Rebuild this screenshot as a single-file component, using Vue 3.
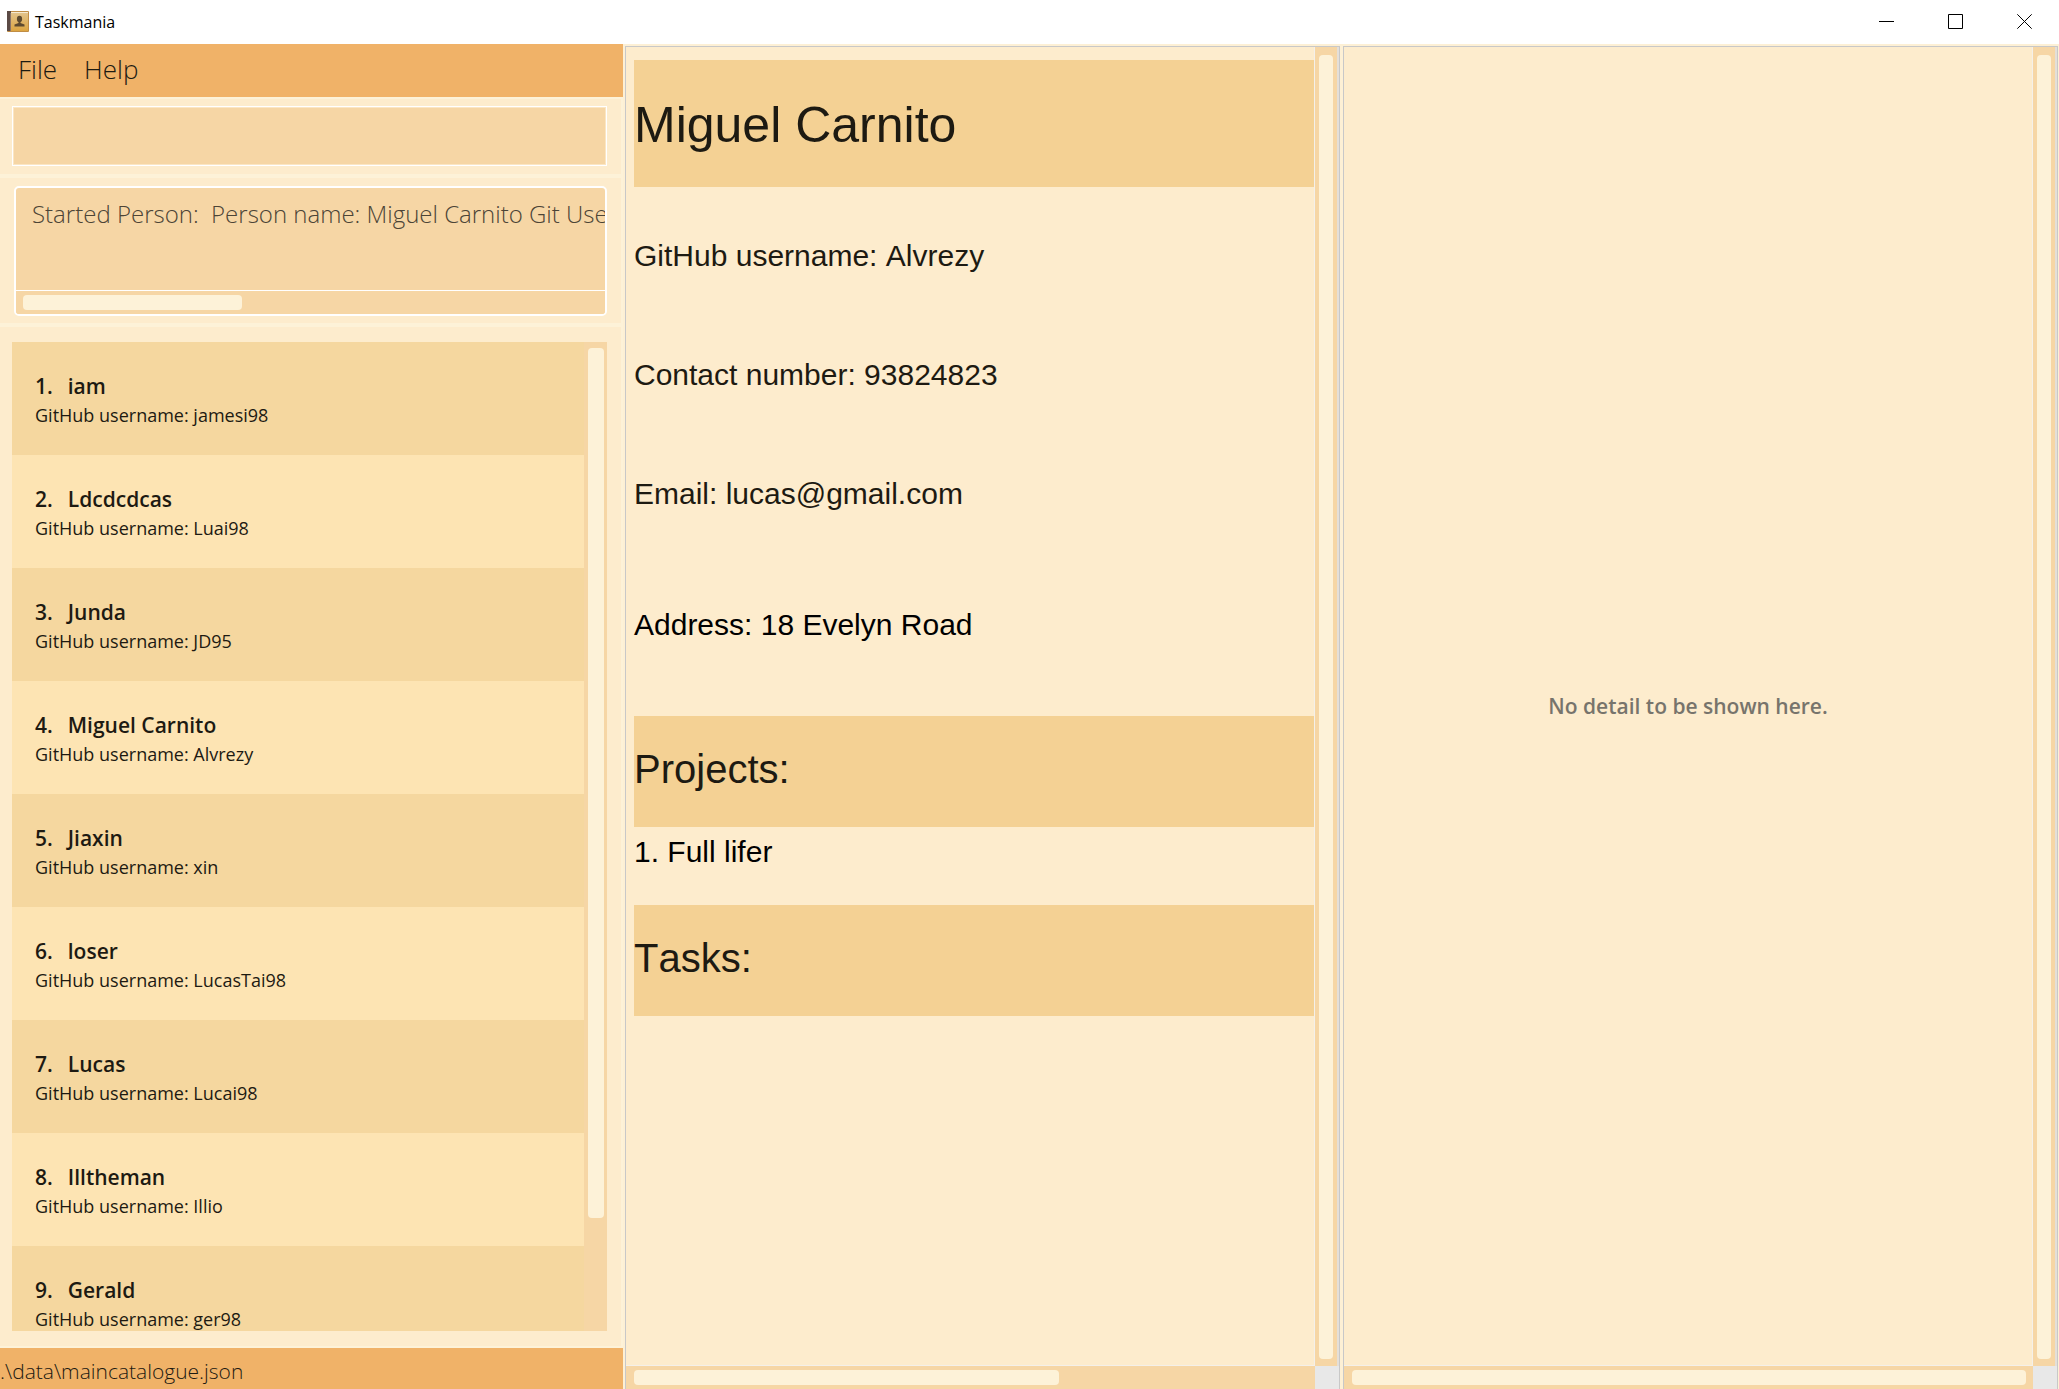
<script setup>
const people = [
  { name: 'iam', user: 'jamesi98' },
  { name: 'Ldcdcdcas', user: 'Luai98' },
  { name: 'Junda', user: 'JD95' },
  { name: 'Miguel Carnito', user: 'Alvrezy' },
  { name: 'Jiaxin', user: 'xin' },
  { name: 'loser', user: 'LucasTai98' },
  { name: 'Lucas', user: 'Lucai98' },
  { name: 'Illtheman', user: 'Illio' },
  { name: 'Gerald', user: 'ger98' },
]
const feedback = 'Started Person:  Person name: Miguel Carnito Git Username:'
const projects = ['Full lifer']
</script>

<template>
  <div class="window">
    <header class="titlebar">
      <svg class="app-icon" viewBox="0 0 22 22" aria-hidden="true">
        <defs>
          <linearGradient id="cover" x1="0" y1="0" x2="0" y2="1">
            <stop offset="0" stop-color="#e2c48e" />
            <stop offset="1" stop-color="#dca541" />
          </linearGradient>
        </defs>
        <rect x="0" y="0" width="22" height="21" rx="1" fill="#c08d45" />
        <rect x="4" y="1" width="17" height="19" fill="url(#cover)" />
        <rect x="2" y="1" width="19" height="1" fill="#f6ead2" />
        <rect x="0" y="0" width="4" height="20" fill="#5b4a45" />
        <rect x="3" y="2" width="1" height="18" fill="#8a7468" />
        <ellipse cx="12.500" cy="8" rx="2.600" ry="3.200" fill="#5d4a30" />
        <path d="M11.500 10h2v2l4 1.500V15.500h-10V13.500l4-1.500z" fill="#5d4a30" />
      </svg>
      <h1 class="app-name">Taskmania</h1>
      <div class="window-controls">
        <button type="button" aria-label="Minimize">
          <svg viewBox="0 0 15 15"><path d="M0 7.500h15" /></svg>
        </button>
        <button type="button" aria-label="Maximize">
          <svg viewBox="0 0 15 15"><path d="M.5.5h14v14H.5z" /></svg>
        </button>
        <button type="button" aria-label="Close">
          <svg viewBox="0 0 15 15"><path d="M.3.3l14.400 14.400M14.700.3L.3 14.700" /></svg>
        </button>
      </div>
    </header>

    <main class="columns">
      <section class="sidebar">
        <nav class="menubar">
          <button type="button">File</button>
          <button type="button">Help</button>
        </nav>
        <div class="command">
          <input type="text" aria-label="Command" />
        </div>
        <div class="result">
          <div class="result-frame">
            <textarea readonly wrap="off" aria-label="Result" :value="feedback"></textarea>
            <div class="track horizontal"><div class="thumb" style="width: 38%"></div></div>
          </div>
        </div>
        <div class="people">
          <div class="people-frame">
            <ol class="people-list">
              <li v-for="(p, i) in people" :key="p.name">
                <p class="person-name"><span class="index">{{ i + 1 }}.</span>{{ p.name }}</p>
                <p class="person-user">GitHub username: {{ p.user }}</p>
              </li>
            </ol>
            <div class="track vertical"><div class="thumb" style="height: 89%"></div></div>
          </div>
        </div>
        <footer class="statusbar">.\data\maincatalogue.json</footer>
      </section>

      <section class="pane">
        <article class="view details">
          <h2 class="band person">Miguel Carnito</h2>
          <p class="field">GitHub username: Alvrezy</p>
          <p class="field">Contact number: 93824823</p>
          <p class="field">Email: lucas@gmail.com</p>
          <p class="field address">Address: 18 Evelyn Road</p>
          <h3 class="band">Projects:</h3>
          <p v-for="(p, i) in projects" :key="p" class="project">{{ i + 1 }}. {{ p }}</p>
          <h3 class="band">Tasks:</h3>
        </article>
        <div class="track vertical"><div class="thumb" style="height: 100%"></div></div>
        <div class="track horizontal"><div class="thumb" style="width: 63%"></div></div>
        <div class="corner"></div>
      </section>

      <section class="pane">
        <div class="view empty"><p>No detail to be shown here.</p></div>
        <div class="track vertical"><div class="thumb" style="height: 100%"></div></div>
        <div class="track horizontal"><div class="thumb" style="width: 100%"></div></div>
        <div class="corner"></div>
      </section>
    </main>
  </div>
</template>

<style>
body {
  margin: 0;
  overflow: hidden;
}
</style>

<style scoped>
* {
  box-sizing: border-box;
}
h1, h2, h3, p, ol {
  margin: 0;
  padding: 0;
  font-weight: 400;
}
button {
  border: 0;
  padding: 0;
  background: none;
  font: inherit;
  color: inherit;
}
.window {
  display: flex;
  flex-direction: column;
  height: 100vh;
  background: #fdf0d5;
  color: #1d1a12;
  font-family: "Open Sans", "Noto Sans", sans-serif;
}
.titlebar {
  display: flex;
  align-items: center;
  flex: none;
  height: 44px;
  padding-left: 7px;
  background: #fff;
}
.app-icon {
  width: 22px;
  height: 22px;
}
.app-name {
  margin-left: 6px;
  font-size: 16px;
  line-height: 24px;
  color: #000;
}
.window-controls {
  display: flex;
  align-self: stretch;
  margin-left: auto;
}
.window-controls button {
  display: flex;
  align-items: center;
  justify-content: center;
  width: 69px;
  height: 43px;
}
.window-controls svg {
  width: 15px;
  height: 15px;
  fill: none;
  stroke: #000;
}
.columns {
  display: grid;
  grid-template-columns: minmax(0, 625fr) minmax(0, 718fr) minmax(0, 716fr);
  flex: 1;
  min-height: 0;
}

.sidebar {
  display: flex;
  flex-direction: column;
  min-height: 0;
  margin-right: 2px;
}
.menubar {
  display: flex;
  gap: 27px;
  height: 53px;
  padding: 0 18px 3px;
  background: #f0b268;
  font-size: 26px;
  font-weight: 300;
}
.command,
.result,
.people {
  border: 2px solid #fdf2d8;
  border-left: 0;
  background: #fdeccd;
}
.command {
  height: 79px;
  padding: 7px 14px 8px 12px;
}
.command input {
  display: block;
  width: 100%;
  height: 60px;
  border: 1px solid #fff;
  outline: 1px solid #fbe6c4;
  outline-offset: -2px;
  border-radius: 0;
  background: #f6d6a5;
  font: inherit;
}
.result {
  height: 149px;
  padding: 8px 14px 8px 12px;
}
.result-frame {
  display: flex;
  flex-direction: column;
  height: 130px;
  margin-left: 2px;
  border: 2px solid #fff;
  border-radius: 5px;
  background: #f6d6a5;
  overflow: hidden;
}
.result textarea {
  flex: 1;
  min-height: 0;
  padding: 8px 16px;
  border: 0;
  border-bottom: 1px solid #fff;
  outline: 0;
  resize: none;
  overflow: hidden;
  background: transparent;
  color: #4c4436;
  font-family: inherit;
  font-size: 24px;
  font-weight: 300;
  line-height: 36px;
}
.people {
  flex: 1;
  min-height: 0;
  padding: 15px 14px 15px 12px;
}
.people-frame {
  display: flex;
  height: 100%;
  overflow: hidden;
}
.people-list {
  flex: 1;
  list-style: none;
}
.people-list li {
  height: 113px;
  padding: 30px 23px;
  background: #f5d79f;
}
.people-list li:nth-child(even) {
  background: #fde4b3;
}
.person-name {
  font-size: 21px;
  font-weight: 600;
  line-height: 29px;
}
.index {
  margin-right: 15px;
}
.person-user {
  font-size: 18px;
  line-height: 28px;
}
.statusbar {
  height: 41px;
  background: #f0b268;
  font-size: 21px;
  font-weight: 300;
  line-height: 47px;
}

.track {
  display: flex;
  background: #f6d6a5;
}
.track.vertical {
  width: 23px;
  padding: 6px 3px 6px 4px;
}
.track.horizontal {
  height: 23px;
  padding: 4px 7px;
}
.thumb {
  width: 100%;
  border-radius: 4px;
  background: #fdf2d8;
}

.pane {
  display: grid;
  grid-template-columns: minmax(0, 1fr) 24px;
  grid-template-rows: minmax(0, 1fr) 23px;
  margin: 2px 3px 0 0;
  border: 1px solid #c8c8c8;
  border-bottom: 0;
  min-height: 0;
}
.pane:last-child {
  margin-right: 1px;
}
.view {
  border-right: 1px solid #f4f0ea;
  border-bottom: 1px solid #f4f0ea;
  background: #fdeccd;
  overflow: hidden;
}
.pane .track.vertical {
  width: 24px;
  padding: 8px 4px 7px;
  border-right: 2px solid #e4dfd8;
}
.pane .track.horizontal {
  padding: 4px 7px 4px 8px;
}
.corner {
  background: #e8e8e8;
}
.details {
  padding: 13px 0 0 8px;
  font-family: "Liberation Sans", Arial, sans-serif;
  font-kerning: none;
}
.band {
  height: 111px;
  background: #f4d194;
  font-size: 40px;
  line-height: 106px;
}
.band.person {
  height: 127px;
  margin-bottom: 10px;
  font-size: 50px;
  line-height: 130px;
}
.field {
  height: 119px;
  font-size: 30px;
  line-height: 118px;
}
.field.address {
  height: 162px;
  padding-top: 12px;
}
.address,
.project {
  color: #000;
}
.project {
  height: 78px;
  font-size: 30px;
  line-height: 50px;
}
.empty {
  display: flex;
  align-items: center;
  justify-content: center;
  color: #77746c;
}
.empty p {
  font-size: 21px;
  font-weight: 600;
}
</style>
